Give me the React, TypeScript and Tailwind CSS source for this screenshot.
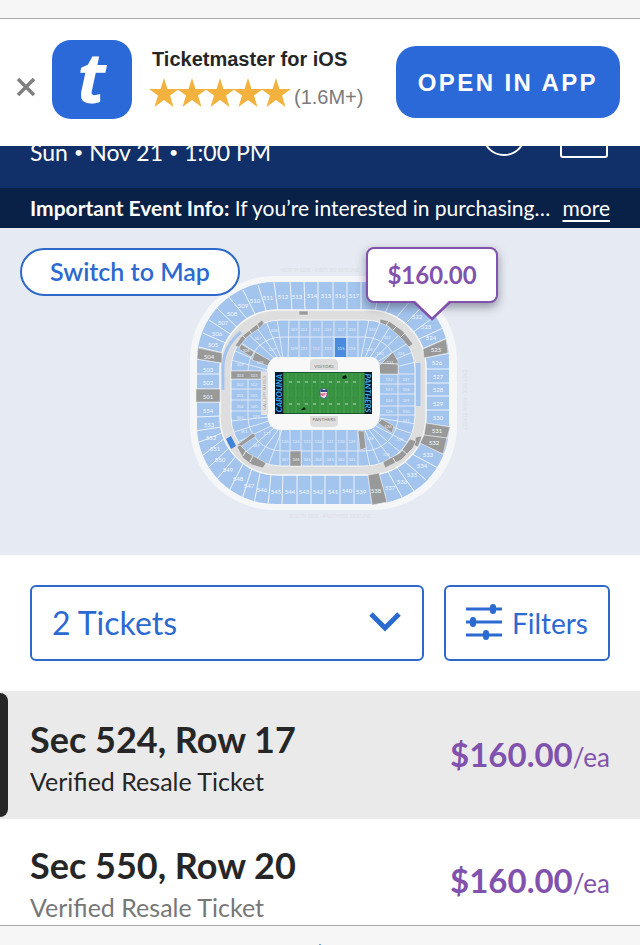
type Line = [number, number, number, number];

const upperDividers: Line[] = [
  [274, 282, 278, 312], [290, 280, 292, 311], [304, 280, 305, 311], [318, 280, 318, 311],
  [333, 280, 333, 311], [347, 280, 347, 311], [361, 280, 361, 311], [381, 282, 375, 312],
  [397, 288, 385, 313], [412, 299, 395, 319], [423, 306, 403, 326], [434, 317, 412, 333],
  [443, 328, 419, 339], [447, 338, 422, 349], [451, 353, 424, 358], [451, 369, 424, 369],
  [451, 383, 424, 383], [451, 396, 424, 396], [451, 410, 424, 410], [451, 427, 424, 423],
  [449, 438, 423, 434], [445, 455, 419, 442], [438, 468, 412, 454], [426, 480, 404, 461],
  [414, 491, 396, 466], [403, 499, 387, 470], [387, 504, 379, 473], [372, 506, 368, 474],
  [354, 506, 354, 474], [340, 506, 340, 474], [325, 506, 325, 474], [311, 506, 311, 474],
  [297, 506, 297, 474], [282, 506, 283, 474], [268, 506, 271, 474], [254, 504, 260, 473],
  [242, 499, 252, 468], [229, 491, 244, 462], [217, 479, 237, 455], [208, 468, 230, 447],
  [202, 456, 225, 438], [197, 443, 222, 433], [195, 431, 221, 427], [195, 417, 221, 416],
  [195, 402, 221, 402], [195, 389, 221, 389], [195, 374, 221, 374], [196, 359, 222, 363],
  [199, 347, 223, 353], [203, 333, 230, 345], [209, 320, 235, 337], [216, 307, 241, 331],
  [228, 296, 248, 320], [243, 290, 256, 316], [258, 285, 267, 313],
];

const lowerDividers: Line[] = [
  // top and bottom
  [289, 320, 288, 358], [299, 320, 299, 358], [310, 320, 310, 358], [322, 320, 322, 358],
  [334, 320, 334, 358], [347, 320, 347, 358], [358, 320, 358, 358],
  [280, 467, 280, 430], [290, 467, 290, 430], [301, 467, 301, 430], [312, 467, 312, 430],
  [323, 467, 323, 430], [336, 467, 336, 430], [347, 467, 347, 430], [358, 467, 358, 430],
  // sides
  [230, 371, 268, 371], [230, 379, 268, 379], [230, 389, 268, 389], [230, 400, 268, 400],
  [230, 411, 268, 411], [379, 374, 416, 374], [379, 384, 416, 384], [379, 394, 416, 394],
  [379, 406, 416, 406], [379, 415, 416, 415],
  // corners
  [277, 319, 283, 358], [266, 321, 281, 358], [255, 325, 278, 358], [246, 332, 275, 359],
  [238, 341, 271, 362], [233, 350, 269, 366], [231, 360, 268, 370],
  [369, 319, 361, 358], [380, 322, 365, 358], [390, 327, 369, 359], [400, 334, 373, 360],
  [408, 343, 377, 362], [413, 352, 379, 366], [416, 362, 379, 371],
  [231, 421, 268, 417], [234, 432, 269, 421], [238, 442, 271, 426], [246, 452, 274, 428],
  [256, 460, 278, 430], [268, 466, 282, 430],
  [416, 424, 379, 418], [413, 434, 378, 422], [408, 443, 376, 426], [400, 452, 373, 429],
  [391, 459, 369, 430], [380, 465, 365, 430], [370, 467, 362, 430],
];

const upperLabels: [number, number, number][] = [
  [504, 209, 357], [503, 208, 370], [502, 208, 383], [501, 208, 397], [554, 208, 411],
  [553, 209, 425], [552, 211, 438], [551, 215, 449], [550, 220, 460], [549, 228, 470],
  [548, 238, 479], [547, 249, 486], [546, 262, 490], [545, 276, 492], [544, 290, 492],
  [543, 304, 492], [542, 318, 492], [541, 333, 492], [540, 347, 491], [539, 361, 492],
  [538, 376, 491], [537, 390, 488], [536, 402, 482], [535, 412, 475], [534, 422, 466],
  [533, 428, 455], [532, 434, 443], [531, 437, 431], [530, 438, 418], [529, 438, 404],
  [528, 438, 390], [527, 438, 377], [526, 437, 363], [525, 436, 350], [524, 431, 338],
  [523, 426, 327], [522, 417, 317], [517, 354, 296],
  [516, 340, 296], [515, 326, 296], [514, 312, 296], [513, 297, 297], [512, 283, 297],
  [511, 268, 298], [510, 255, 301], [509, 243, 306], [508, 232, 314], [507, 223, 323],
  [506, 217, 334], [505, 213, 345],
];

const lowerLabels: [number, number, number][] = [
  [309, 294, 330], [311, 304, 330], [313, 316, 330], [315, 328, 330], [317, 341, 330], [318, 352, 330],
  [109, 294, 349], [111, 304, 349], [112, 316, 349], [113, 328, 349], [115, 341, 349], [116, 352, 349],
  [135, 285, 442], [134, 296, 442], [133, 307, 442], [132, 318, 442], [131, 330, 442], [130, 341, 442], [129, 352, 442],
  [347, 285, 460], [346, 296, 460], [345, 307, 460], [344, 318, 460], [343, 330, 460], [342, 341, 460], [341, 352, 460],
  [303, 240, 376], [302, 240, 385], [301, 240, 396], [354, 240, 407], [353, 240, 418], [351, 244, 432], [349, 256, 446],
  [103, 254, 376], [102, 254, 385], [101, 254, 396], [140, 254, 407], [139, 256, 417], [137, 267, 434],
  [305, 240, 365], [306, 246, 351], [307, 258, 339], [308, 274, 331], [105, 260, 363], [107, 272, 350],
  [118, 369, 350], [120, 380, 354], [121, 390, 363], [320, 372, 330], [322, 387, 338], [324, 401, 354],
  [122, 389, 380], [123, 389, 390], [124, 389, 401], [125, 389, 412], [327, 406, 380], [328, 406, 390],
  [329, 406, 401], [330, 406, 412], [331, 406, 421], [126, 388, 427], [128, 370, 439], [335, 400, 440],
  [338, 386, 455],
];

const closed = [
  'M198 348L222 353V363L197 359Z',
  'M196 389H220V402H196Z',
  'M423 349L446 339L448 353L424 358Z',
  'M426 423L450 427L447 438L424 435Z',
  'M424 435L447 438L443 454L420 443Z',
  'M368 475L379 473L387 502L372 505Z',
  'M299 311H308V315H299Z',
  'M235 346L241 337L256 325L262 320L264 323L261 327L247 337L239 347Z',
  'M241 344L254 352L251 357L239 349Z',
  'M255 352L271 361L268 366L252 360Z',
  'M231 371H261V379H231Z',
  'M380 319L389 321L403 331L413 344L409 347L400 337L388 326L380 323Z',
  'M378 367L393 352L398 361V374H380Z',
  'M378 423L382 419L394 426L392 433Z',
  'M358 431H364L366 448L360 450Z',
  'M290 451H301V466H290Z',
  'M237 445L253 433L256 436L240 447Z',
  'M237 447L240 445L248 453L266 463L263 468L252 465L243 458Z',
  'M416 437L422 436L418 447L413 445Z',
  'M383 462L400 453L410 439L416 441L413 448L401 460L385 468Z',
];

const listings = [
  { seat: 'Sec 524, Row 17', price: '$160.00', active: true },
  { seat: 'Sec 550, Row 20', price: '$160.00', active: false },
];

const AppBanner = () => {
  return (
    <div className="flex h-[127px] shrink-0 items-start bg-white px-4 pt-5">
      <button aria-label="Close" className="mt-9 text-[#808080]">
        <svg width="20" height="24" viewBox="0 0 20 24" fill="none" stroke="currentColor" strokeWidth="3.6">
          <path d="M2 4L18 20M18 4L2 20" />
        </svg>
      </button>
      <div className="ml-4 h-20 w-20 shrink-0">
        <svg viewBox="0 0 80 80" className="h-full w-full">
          <rect y="1" width="80" height="79" rx="19" fill="#2c69d8" />
          <text x="25" y="64" fontSize="70" fontWeight="700" fontStyle="italic" fontFamily="'Open Sans', sans-serif" fill="white">
            t
          </text>
        </svg>
      </div>
      <div className="ml-5 pt-2 font-['Liberation_Sans',Arial,sans-serif]">
        <p className="text-xl leading-6 font-bold text-[#262626]">Ticketmaster for iOS</p>
        <div className="-ml-0.5 flex items-center pt-1.5">
          {[1, 2, 3, 4, 5].map((n) => (
            <svg key={n} viewBox="0 0 28 32" className="h-8 w-7 overflow-visible" fill="#f3b23e">
              <path d="M14 1L17.500 12H29L20 18.500L23.500 30L14 23L4.500 30L8 18.500L-1 12H10.500Z" />
            </svg>
          ))}
          <span className="pt-2 pl-1 text-xl leading-6 text-[#7a7a7a]">(1.6M+)</span>
        </div>
      </div>
      <button className="mt-[7px] mr-1 ml-auto h-[72px] rounded-[20px] bg-[#2c69d8] px-[22px] pt-0.5 font-['Liberation_Sans',Arial,sans-serif] text-2xl font-bold tracking-widest whitespace-nowrap text-white">
        OPEN IN APP
      </button>
    </div>
  );
};

const EventHeader = () => {
  return (
    <header className="shrink-0 text-white">
      <div className="flex h-[42px] items-end justify-between overflow-hidden bg-[#112f68] px-[30px]">
        <p className="flex items-center gap-1.5 pb-5 text-[23px] leading-8">
          <span>Sun</span>
          <span className="text-base">•</span>
          <span>Nov 21</span>
          <span className="text-base">•</span>
          <span>1:00 PM</span>
        </p>
        <svg width="130" height="42" viewBox="0 0 130 42" fill="none" stroke="white" strokeWidth="2">
          <circle cx="24" cy="-12" r="21" />
          <rect x="81" y="-30" width="46" height="41" rx="2" />
        </svg>
      </div>
      <div className="flex h-10 items-center justify-between gap-2 bg-[#0a2147] px-[30px] text-[21px] whitespace-nowrap">
        <p>
          <span className="font-bold">Important Event Info:</span> If you’re interested in purchasing…
        </p>
        <a href="#info" className="underline underline-offset-4">
          more
        </a>
      </div>
    </header>
  );
};

const StadiumMap = () => {
  return (
    <svg width="320" height="327" viewBox="160 228 320 327" fontFamily="Lato, sans-serif" textAnchor="middle">
      <defs>
        <clipPath id="upper">
          <path clipRule="evenodd" d="M275 282H371A78 78 0 0 1 449 360V426A78 78 0 0 1 371 504H275A78 78 0 0 1 197 426V360A78 78 0 0 1 275 282ZM281 310A61 57 0 0 0 220 367V418A61 57 0 0 0 281 475H365A61 57 0 0 0 426 418V367A61 57 0 0 0 365 310Z" />
        </clipPath>
        <clipPath id="lower">
          <rect x="231" y="320" width="184" height="146" rx="50" />
        </clipPath>
      </defs>
      <rect x="190" y="276" width="267" height="234" rx="84" fill="#f5f6f8" />
      <rect x="197" y="282" width="252" height="222" rx="78" fill="#a3c4ed" />
      <g clipPath="url(#upper)" stroke="#eef4fc" strokeWidth="1">
        {upperDividers.map(([x1, y1, x2, y2]) => (
          <line key={`${x1}-${y1}`} x1={x1} y1={y1} x2={x2} y2={y2} />
        ))}
      </g>
      <rect x="220" y="310" width="206" height="165" rx="58" fill="#dedede" stroke="#f7f7f7" strokeWidth="1.5" />
      <path d="M223 390V366Q224 346 241 332" fill="none" stroke="#a3c4ed" strokeWidth="3" />
      <path d="M418 363V406" stroke="#a3c4ed" strokeWidth="5" />
      <rect x="231" y="320" width="184" height="146" rx="50" fill="#a3c4ed" stroke="#f3f5f7" strokeWidth="1" />
      <g clipPath="url(#lower)" stroke="#edf3fb" strokeWidth="0.8">
        {lowerDividers.map(([x1, y1, x2, y2]) => (
          <line key={`${x1}-${y1}`} x1={x1} y1={y1} x2={x2} y2={y2} />
        ))}
        <rect x="248" y="337" width="150" height="114" rx="34" fill="none" />
      </g>
      {closed.map((d) => (
        <path key={d} d={d} fill="#999" stroke="#e9e9e9" strokeWidth="0.6" />
      ))}
      <path d="M243 336L246 339M249 330L252 334M257 324L259 328M389 321L386 325M397 326L393 330M405 333L401 337M246 451L243 456M253 456L250 462M393 458L396 463M402 450L407 454M379 363L398 364" stroke="#e9e9e9" />
      <rect x="335" y="338" width="11" height="19" fill="#4a8be0" />
      <path d="M226 439L231 436L236 446L231 449Z" fill="#3f83dc" />
      <path d="M275 357H370Q380 357 380 370V412Q380 430 364 430H281Q267 430 267 412V370Q267 362 275 357Z" fill="#f8f8f8" />
      <rect x="261" y="372" width="7" height="43" fill="#e2e2e2" />
      <path d="M310 362Q310 359 314 359H333Q338 359 338 364V370H310Z" fill="#dedede" />
      <path d="M310 416H338V423Q338 427 333 427H314Q310 427 310 422Z" fill="#dedede" />
      <text x="324" y="368" fontSize="4.500" fill="#777">VISITORS</text>
      <text x="324" y="421" fontSize="4.500" fill="#777">PANTHERS</text>
      <text transform="translate(266 393) rotate(-90)" fontSize="4.500" fill="#999">GALLERY SUITES</text>

      <rect x="275" y="372" width="97" height="42" fill="#071a2b" />
      <rect x="283.500" y="372.500" width="81" height="41" fill="#35913f" />
      {[...Array(21)].map((_, i) => (
        <path key={i} d={`M${284 + i * 4} 373V413`} stroke={i % 2 ? '#5dab60' : '#48a04f'} strokeWidth="0.7" />
      ))}
      <path d="M289 382H360M289 404H360" stroke="#b8dcb7" strokeWidth="1" strokeDasharray="3 5" />
      <path d="M284 388H364M284 398H364" stroke="#2d8338" strokeWidth="0.5" strokeDasharray="1 3" />
      <path d="M343 376L346 375L347 378L344 379L342 378ZM302 409L304 407L306 409L304 410L301 410Z" fill="#061c13" />
      <path d="M320 389.500Q322 390 324 388.500Q326 390 327.500 389.500V395Q327 397.500 324 398.500Q320 397.500 320 395Z" fill="#e8e9f3" stroke="#304b87" strokeWidth="0.7" />
      <path d="M320.500 390H327V392H320.500Z" fill="#304b87" />
      <text x="324" y="396" fontSize="4" fontWeight="700" fill="#c63350">NFL</text>
      <text transform="translate(282 393) rotate(-90)" fontSize="8" fontWeight="900" fontStyle="italic" fill="#3fa4e8">CAROLINA</text>
      <text transform="translate(365 393) rotate(90)" fontSize="8" fontWeight="900" fontStyle="italic" fill="#3fa4e8">PANTHERS</text>

      <g fontSize="6" fill="#f5f9ff">
        {upperLabels.map(([n, x, y]) => (
          <text key={n} x={x} y={y + 2}>{n}</text>
        ))}
      </g>
      <g fontSize="4" fill="#e5effc">
        {lowerLabels.map(([n, x, y]) => (
          <text key={n} x={x} y={y + 1}>{n}</text>
        ))}
      </g>
      <g fontSize="5" fill="#dcdfe6">
        <text x="320" y="272">NORTH SIDE - VISITORS SIDELINE</text>
        <text x="330" y="518">SOUTH SIDE - PANTHERS SIDELINE</text>
        <text transform="translate(463 400) rotate(90)">EAST SIDE - MAIN STREET</text>
      </g>
    </svg>
  );
};

const TicketControls = () => {
  return (
    <div className="flex shrink-0 gap-5 bg-white p-[30px] text-[#2c69d0]">
      <div className="relative h-[76px] flex-1">
        <select aria-label="Tickets" className="h-full w-full appearance-none rounded-md border-2 border-[#2c69c8] bg-white pl-5 text-[32px]">
          <option>2 Tickets</option>
        </select>
        <svg className="pointer-events-none absolute top-6 right-[22px]" width="34" height="24" viewBox="0 0 34 24" fill="none" stroke="currentColor" strokeWidth="5">
          <path d="M3 5L17 19L31 5" />
        </svg>
      </div>
      <button className="flex h-[76px] items-center gap-2.5 rounded-md border-2 border-[#2c69c8] px-5 text-[28px]">
        <svg width="36" height="38" viewBox="0 0 36 38" stroke="currentColor" strokeWidth="3" fill="currentColor">
          <path d="M0 5H36M0 18H36M0 31H36" />
          <g stroke="none">
            <rect x="24" y="0" width="6" height="10" rx="3" />
            <rect x="4" y="13" width="6" height="10" rx="3" />
            <rect x="17" y="26" width="6" height="10" rx="3" />
          </g>
        </svg>
        Filters
      </button>
    </div>
  );
};

const App = () => {
  return (
    <div className="flex h-screen flex-col overflow-hidden bg-white font-[Lato,sans-serif]">
      <div className="h-[19px] shrink-0 border-b border-[#a9a9a9] bg-[#f6f6f6]" />
      <AppBanner />
      <EventHeader />
      <section className="relative flex h-[327px] shrink-0 justify-center bg-[#e6eaf2]">
        <div className="relative">
          <StadiumMap />
          <button className="absolute top-[19px] left-[206px] h-14 w-[132px] rounded-lg border-2 border-[#8152ad] bg-white text-2xl font-bold text-[#8152ad] shadow-[0_4px_10px_rgba(60,60,80,0.5)]">
            $160.00
            <svg className="absolute top-[50px] left-[44px]" width="40" height="22" viewBox="0 0 40 22">
              <path d="M1 0L20 20L39 0Z" fill="white" />
              <path d="M2 3L20 20L38 3" fill="none" stroke="#8152ad" strokeWidth="2.500" />
            </svg>
          </button>
        </div>
        <button className="absolute top-5 left-5 h-12 w-[220px] rounded-full border-2 border-[#2c69c8] bg-white text-[25px] font-semibold text-[#2c69d0]">
          Switch to Map
        </button>
      </section>
      <TicketControls />
      <ul className="min-h-0 flex-1 overflow-hidden">
        {listings.map(({ seat, price, active }) => (
          <li key={seat} className={active ? 'relative bg-[#eaeaea]' : 'relative bg-white'}>
            {active && <span className="absolute inset-y-0.5 left-0 w-2 rounded-r-lg bg-[#262626]" />}
            <a href="#ticket" className={active ? 'flex h-32 items-center justify-between px-[30px]' : 'flex h-[124px] items-center justify-between px-[30px]'}>
              <div className="pt-2">
                <p className="text-4xl leading-[44px] font-bold text-[#262626]">{seat}</p>
                <p className={active ? 'text-[25px] leading-10 text-[#262626]' : 'text-[25px] leading-10 text-[#777]'}>
                  Verified Resale Ticket
                </p>
              </div>
              <p className="text-[26px] text-[#8152ad]">
                <span className="text-[33px] font-bold">{price}</span>/ea
              </p>
            </a>
          </li>
        ))}
      </ul>
      <footer className="flex h-5 shrink-0 items-end justify-center border-t border-[#a9a9a9] bg-[#f6f6f6]">
        <span className="h-px w-0.5 bg-[#6aa3dd]" />
      </footer>
    </div>
  );
};

export default App;
